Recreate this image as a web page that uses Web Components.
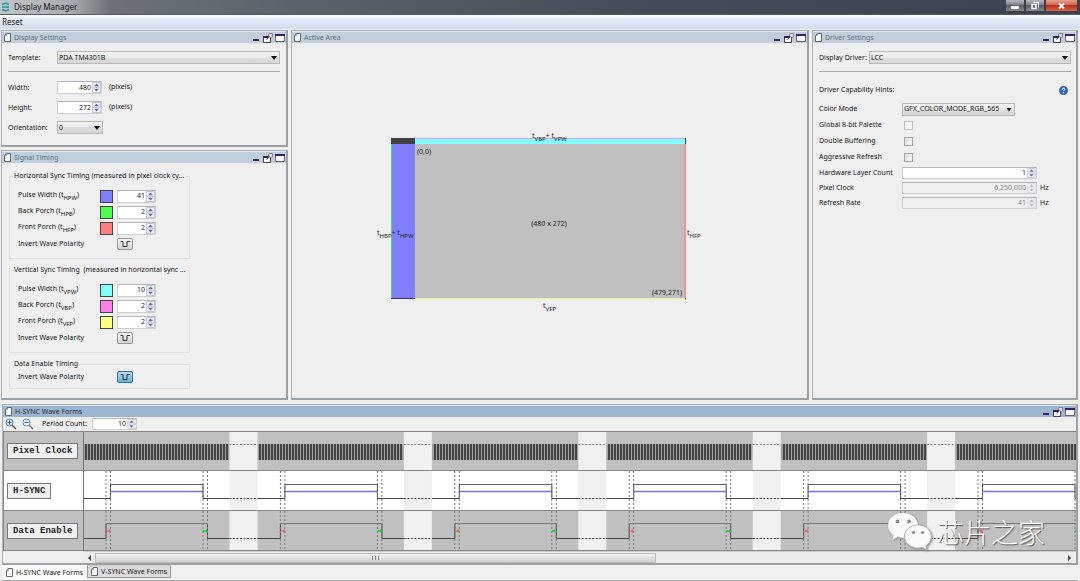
<!DOCTYPE html>
<html lang="en">
<head>
<meta charset="utf-8">
<title>Display Manager</title>
<style>
  html, body { margin: 0; min-height: 100%; background: #f0f0f0; }
  body { font: 7px/10px "Noto Sans", sans-serif; color: #222; }
</style>
</head>
<body>
<display-manager></display-manager>
<script>
const controls = `
  * { box-sizing: border-box; }
  input, select, button { font: inherit; color: inherit; margin: 0; border-radius: 0; }
  .spin { display: inline-flex; height: 13px; background: #fff; border: 1px solid #ccd0d6; border-top-color: #b4b8be; }
  .spin input { flex: 1; min-width: 0; width: 100%; border: 0; padding: 0 1px; background: none; text-align: right; outline: 0; }
  .spin svg { width: 9px; height: 11px; flex: none; }
  .spin.off { background: #efefef; color: #8a8a8a; }
  .spin.off svg { opacity: .45; }
  .drop { display: inline-flex; position: relative; height: 13px; }
  .drop select { appearance: none; width: 100%; height: 100%; padding: 0 12px 0 1px; border: 1px solid #b9b9b9;
    background: linear-gradient(#f3f3f3, #ebebeb 50%, #dedede 50%, #d8d8d8); outline: 0; line-height: 10px; }
  .drop::after { content: ""; position: absolute; right: 3px; top: 5px; width: 6px; height: 4px; background: #111;
    clip-path: polygon(0 0, 100% 0, 50% 100%); pointer-events: none; }
  hr { border: 0; border-top: 1px solid #a9a9a9; margin: 0; }
  sub { font-size: 6px; line-height: 0; vertical-align: -3px; }
`;
const arrows = `<svg viewBox="0 0 9 11" aria-hidden="true"><rect x=".5" y=".5" width="8" height="10" fill="#f1f2f6" stroke="#c4c8d4"/><path d="M0 5.5h9" stroke="#c4c8d4"/><path d="M4.5 1.6 7 4.2H2zM4.500 9.400 7 6.800H2z" fill="#6467a8"/></svg>`;
const spin = (id, value, width, off) =>
  `<span class="spin ${off ? 'off' : ''}" style="width:${width}"><input id="${id}" type="text" value="${value}" ${off ? 'disabled' : ''}>${arrows}</span>`;
const drop = (id, value, width) =>
  `<span class="drop" style="width:${width}"><select id="${id}"><option>${value}</option></select></span>`;
const pageIcon = `<svg class="page" width="7" height="9" viewBox="0 0 7 9" aria-hidden="true"><path d="M2.500.5h4v8h-6v-6z" fill="#fff" stroke="#5c6a76"/><path d="M2.500.5v2h-2" fill="none" stroke="#5c6a76" stroke-width=".6"/></svg>`;

function define(name, css, html, ready) {
  customElements.define(name, class extends HTMLElement {
    constructor() {
      super();
      const root = this.attachShadow({ mode: 'open' });
      root.innerHTML = `<style>${controls}${css}</style>${typeof html === 'function' ? html(this) : html}`;
      if (ready) ready(root, this);
    }
  });
}

/* Docked panel: title strip with window buttons, content in the slot */
define('dock-panel', `
  :host { display: flex; flex-direction: column; border: 1px solid #a9b0b6; border-right: 2px solid #9aa2a8; border-bottom: 2px solid #9aa2a8; background: #efefef; }
  header { display: flex; align-items: center; height: 12px; padding: 0 1px 0 2px; gap: 2px; background: #c0cfdb; color: #5b7182; border-top: 1px solid #dfe6ec; }
  :host([active]) header { background: #9cb5d1; color: #1c2733; }
  h2 { margin: 0 auto 0 1px; font: inherit; white-space: nowrap; }
  button { border: 0; padding: 0; background: none; display: flex; }
  .body { flex: 1; display: flex; flex-direction: column; min-width: 0; }
`, el => `<header>${pageIcon}<h2>${el.getAttribute('heading')}</h2>
  <button aria-label="Minimize"><svg width="9" height="10"><path d="M1 6h6v2H1z" fill="#3d1c66"/></svg></button>
  <button aria-label="Float"><svg width="10" height="10"><path d="M.5 3.500h7v6h-7z" fill="#fff" stroke="#4a3c5c"/><path d="M0 3h6v2H0z" fill="#3d1c66"/><path d="M3.500 6.500 7 3" stroke="#444" fill="none"/><path d="M6 .5h3.500V4L8 5 5 2z" fill="#ddd" stroke="#666" stroke-width=".7"/></svg></button>
  <button aria-label="Maximize"><svg width="10" height="10"><path d="M.5 1.500h9v7h-9z" fill="#fff" stroke="#6a5c7c"/><path d="M0 1h10v2H0z" fill="#3d1c66"/></svg></button>
  </header><div class="body"><slot></slot></div>`);

define('display-settings', `
  :host { display: block; padding: 8px 6px 11px 6px; }
  form { display: grid; grid-template-columns: 49px 1fr; row-gap: 7px; align-items: center; }
  form > * { height: 13px; } label { line-height: 13px; }
  hr { grid-column: 1 / 3; height: 1px; margin-bottom: 2px; }
  .size { display: flex; gap: 7px; line-height: 11px; }
`, `<form>
  <label for="tpl">Template:</label>${drop('tpl', 'PDA TM4301B', '100%')}
  <hr>
  <label for="w">Width:</label><div class="size">${spin('w', 480, '45px')}<span>(pixels)</span></div>
  <label for="h">Height:</label><div class="size">${spin('h', 272, '45px')}<span>(pixels)</span></div>
  <label for="o">Orientation:</label>${drop('o', '0', '46px')}
</form>`);

/* One titled group of timing rows */
define('timing-group', `
  :host { display: block; width: 181px; }
  fieldset { margin: 0; padding: 0 0 0 8px; border: 1px solid #e0e0e0; min-width: 0; }
  legend { padding: 0 1px; margin-left: -5px; height: 10px; white-space: nowrap; }
  slot { display: block; padding: 7px 0 6px; }
  :host([compact]) slot { padding: 0 0 3px; }
`, el => `<fieldset><legend>${el.getAttribute('heading')}</legend><slot></slot></fieldset>`);

define('timing-row', `
  :host { display: grid; grid-template-columns: 78px 13px 39px; column-gap: 4px; align-items: center; height: 16px; }
  label { line-height: 12px; height: 15px; white-space: nowrap; }
  .swatch { width: 13px; height: 13px; padding: 0; border: 1px solid #444; background: var(--swatch); }
`, el => `<label for="v">${el.getAttribute('label')} (t<sub>${el.getAttribute('sub')}</sub>)</label>
  <button class="swatch" aria-label="Colour"></button>${spin('v', el.getAttribute('value'), '39px')}`);

define('polarity-row', `
  :host { display: grid; grid-template-columns: 99px 17px; align-items: center; height: 16px; }
  button { width: 16px; height: 12px; padding: 0; border: 1px solid #999; border-radius: 2px; background: linear-gradient(#f4f4f4, #d5d5d5); display: flex; align-items: center; justify-content: center; }
  :host([on]) button { background: linear-gradient(#b9dcf0, #64aed8); border-color: #33759d; }
  label { white-space: nowrap; }
`, `<label for="b">Invert Wave Polarity</label>
  <button id="b"><svg width="11" height="8" aria-hidden="true"><path d="M.5 1.500h2.500v5h4v-5h3" fill="none" stroke="#333"/></svg></button>`);

define('signal-timing', `
  :host { display: flex; flex-direction: column; gap: 6px; padding: 8px 7px 8px; }
`, `<timing-group heading="Horizontal Sync Timing (measured in pixel clock cy...">
    <timing-row label="Pulse Width" sub="HPW" value="41" style="--swatch:#8080ff"></timing-row>
    <timing-row label="Back Porch" sub="HPB" value="2" style="--swatch:#4dff4d"></timing-row>
    <timing-row label="Front Porch" sub="HFP" value="2" style="--swatch:#ff8080"></timing-row>
    <polarity-row></polarity-row>
  </timing-group>
  <timing-group heading="Vertical Sync Timing&nbsp; (measured in horizontal sync ...">
    <timing-row label="Pulse Width" sub="VPW" value="10" style="--swatch:#80ffff"></timing-row>
    <timing-row label="Back Porch" sub="VBP" value="2" style="--swatch:#ff80e8"></timing-row>
    <timing-row label="Front Porch" sub="VFP" value="2" style="--swatch:#ffff80"></timing-row>
    <polarity-row></polarity-row>
  </timing-group>
  <timing-group compact heading="Data Enable Timing"><polarity-row on></polarity-row></timing-group>`);

define('active-area', `
  :host { flex: 1; display: flex; align-items: center; justify-content: center; }
  text { font: 7px "Noto Sans", sans-serif; fill: #222; }
  .s { font-size: 6px; }
  path { shape-rendering: crispEdges; }
`, `<svg width="345" height="182" viewBox="0 0 345 182" role="img" aria-label="Active area diagram">
  <path d="M14 8h295v161H14z" fill="#c0c0c0"/>
  <path d="M38 8h270v2H38z" fill="#d9a3f3"/><path d="M38 9h270v5H38z" fill="#80ffff"/>
  <path d="M15 14h23v154H15z" fill="#8080ff"/><path d="M14 14h1v154h-1z" fill="#40e070"/>
  <path d="M14 8h24v6H14z" fill="#404040"/><path d="M14 168h24v1H14z" fill="#333366"/>
  <path d="M38 168h270v1H38z" fill="#f2f28c"/><path d="M307 14h2v154h-2z" fill="#f79090"/>
  <path d="M308 8h1v6h-1zM308 168h1v1h-1z" fill="#404040"/>
  <text x="40" y="24">(0,0)</text>
  <text x="172" y="96" text-anchor="middle">(480 x 272)</text>
  <text x="305" y="165" text-anchor="end">(479,271)</text>
  <text x="155" y="8">t<tspan class="s" dy="3">VBP</tspan><tspan dy="-3">+ t</tspan><tspan class="s" dy="3">VPW</tspan></text>
  <text x="0" y="105">t<tspan class="s" dy="3">HBP</tspan><tspan dy="-3">+ t</tspan><tspan class="s" dy="3">HPW</tspan></text>
  <text x="310" y="105">t<tspan class="s" dy="3">HFP</tspan></text>
  <text x="166" y="178">t<tspan class="s" dy="3">VFP</tspan></text>
</svg>`);

define('driver-settings', `
  :host { display: flex; flex-direction: column; padding: 8px 5px 8px 6px; }
  .row { display: grid; grid-template-columns: 83px 1fr; align-items: center; height: 16px; }
  .row > span.unit { display: flex; gap: 3px; align-items: center; }
  .num { height: 15px; }
  .top { grid-template-columns: 50px 1fr; height: 13px; white-space: nowrap; }
  hr { margin: 7px 0 11px; }
  .hints { display: flex; justify-content: space-between; align-items: center; height: 14px; margin-bottom: 4px; }
  h3 { margin: 0; font: inherit; }
  .hints button { border: 0; padding: 0; background: none; display: flex; margin-right: 3px; }
  input[type=checkbox] { appearance: none; width: 9px; height: 9px; margin-left: 2px; border: 1px solid #a4a4a4; background: linear-gradient(135deg, #ddd, #f7f7f7); }
  input[type=checkbox]:disabled { border-color: #c4c4c4; background: #f7f7f7; }
  .num .spin { height: 12px; } .num .spin svg { height: 10px; }
`, `<div class="row top"><label for="dd">Display Driver:</label>${drop('dd', 'LCC', '100%')}</div><hr>
  <div class="hints"><h3>Driver Capability Hints:</h3><button aria-label="Help"><svg width="9" height="9" viewBox="0 0 9 9"><circle cx="4.500" cy="4.500" r="4.200" fill="#2f6cc4" stroke="#1c4c9a" stroke-width=".5"/><path d="M3.200 3.600c0-1.800 2.600-1.700 2.600-.2 0 .9-1.300 1-1.300 2M4.500 6.200v1" fill="none" stroke="#fff"/></svg></button></div>
  <div class="row"><label for="cm">Color Mode</label>${drop('cm', 'GFX_COLOR_MODE_RGB_565', '113px')}</div>
  <div class="row"><label for="gp">Global 8-bit Palette</label><input type="checkbox" id="gp" disabled></div>
  <div class="row"><label for="db">Double Buffering</label><input type="checkbox" id="db"></div>
  <div class="row"><label for="ar">Aggressive Refresh</label><input type="checkbox" id="ar"></div>
  <div class="row num"><label for="hl">Hardware Layer Count</label>${spin('hl', 1, '135px')}</div>
  <div class="row num"><label for="pc">Pixel Clock</label><span class="unit">${spin('pc', '6,250,000', '135px', true)}Hz</span></div>
  <div class="row num"><label for="rr">Refresh Rate</label><span class="unit">${spin('rr', 41, '135px', true)}Hz</span></div>`);

/* Timing chart: fixed signal names on the left, repeated periods on the right */
define('wave-chart', `
  :host { display: grid; grid-template-columns: 80px 1fr; height: 120px; border-top: 1px solid #888; border-left: 1px solid #888; overflow: hidden; }
  .names { display: grid; grid-template-rows: 39px 40px 40px; border-right: 1px solid #777; }
  .names div { display: flex; align-items: center; padding-left: 3px; background: #c0c0c0; border-bottom: 1px solid #888; }
  .names div:nth-child(2) { background: #fff; }
  .names span { font: bold 9px/14px "Liberation Mono", monospace; padding: 0 5px; border: 1px solid #777; background: #f0f0f0; color: #222; white-space: nowrap; }
  .plot { overflow: hidden; min-width: 0; }
  svg { display: block; }
`, `<div class="names"><div><span>Pixel Clock</span></div><div><span>H-SYNC</span></div><div><span>Data Enable</span></div></div>
  <div class="plot"></div>`, root => {
  const period = 174.4, count = 16;
  const rise = 26.5, fall = 119, gap = 145.5, gapEnd = 173.5, de1 = 22, de2 = 123.5;
  let body = '';
  for (let i = -1; i < count; i++) {
    const o = i * period, X = v => (o + v).toFixed(1);
    body += `<path d="M${X(gapEnd - period)} 12H${X(gap)}V28H${X(gapEnd - period)}z" fill="#a0a0a0"/>`;
    for (let c = 1; c < 145; c += 3) body += `<path d="M${Math.round(o + c)} 12h2v16h-2z" fill="#444"/>`;
  }
  for (let i = -1; i < count; i++) {
    const o = i * period, X = v => (o + v).toFixed(1);
    const line = (lo, hi, a, b, top) => `<path d="M${X(gapEnd - period)} ${lo}H${X(a)}V${hi}M${X(b)} ${hi}V${lo}H${X(gap)}" fill="none" stroke="#444"/><path d="M${X(a)} ${hi}H${X(b)}" stroke="${top}"/>`;
    body += `<path d="M${X(gap)} 0H${X(gapEnd)}V118H${X(gap)}z" fill="#f0f0f0"/>
      <path d="M${X(gap)} 12.500h28" stroke="#888" stroke-dasharray="2 1.500"/>
      <path d="M${X(gap)} 66.500h28M${X(gap)} 106.500h28" stroke="#444" stroke-dasharray="2 1.500"/>
      <path d="M${X(rise)} 59.500H${X(fall)}" stroke="#7474e6" stroke-width="1.400"/>
      ${line(66.5, 52.5, rise, fall, '#666')}${line(106.5, 91.5, de1, de2, '#777')}
      <path d="M${X(de1)} 39v80M${X(rise)} 39v80M${X(fall)} 39v80M${X(de2)} 39v80" stroke="#777" stroke-dasharray="2 2"/>
      <path d="M${X(de1 + 1)} 99l3-1.500v3zM${X(de1 + 3)} 99h2" fill="#f06060" stroke="#f06060" stroke-width=".5"/>
      <path d="M${X(fall)} 98h3v-1l2 2-2 2v-1h-3z" fill="#33cc33"/>`;
  }
  root.querySelector('.plot').innerHTML = `<svg width="${Math.ceil(period * count)}" height="119" aria-hidden="true">
    <rect width="100%" height="119" fill="#c0c0c0"/><rect y="39" width="100%" height="39" fill="#fff"/>
    ${body}<path d="M0 38.500H2800M0 78.500H2800M0 118.500H2800" stroke="#888"/></svg>`;
});

define('wave-forms', `
  :host { display: block; }
  .tools { display: flex; align-items: center; height: 14px; padding: 0 2px; gap: 5px; }
  .tools button { border: 0; padding: 0; background: none; display: flex; }
  .tools label { margin: 0 0 0 3px; }
  .tools .spin { height: 12px; } .tools .spin svg { height: 10px; }
  .scroll { display: flex; align-items: center; height: 12px; margin-left: 80px; padding-right: 1px; background: #ececec; border-top: 1px solid #ccc; }
  .scroll button { width: 12px; border: 0; padding: 0; background: none; display: flex; justify-content: center; }
  .track { flex: 1; height: 10px; }
  .thumb { width: 58%; height: 10px; border: 1px solid #bbb; background: linear-gradient(#f4f4f4, #cfcfcf); display: flex; align-items: center; justify-content: center; }
`, `<div class="tools">
    <button aria-label="Zoom in"><svg width="12" height="12"><path d="m7 7 4 4" stroke="#555" stroke-width="1.500"/><circle cx="4.500" cy="4.500" r="3.500" fill="#eaf4fc" stroke="#4b7ea8"/><path d="M2.500 4.500h4M4.500 2.500v4" stroke="#245f96"/></svg></button>
    <button aria-label="Zoom out"><svg width="12" height="12"><path d="m7 7 4 4" stroke="#777" stroke-width="1.500"/><circle cx="4.500" cy="4.500" r="3.500" fill="#eaf4fc" stroke="#6b8ea8"/><path d="M2.500 4.500h4" stroke="#245f96"/></svg></button>
    <label for="n">Period Count:</label>${spin('n', 10, '45px')}
  </div>
  <wave-chart></wave-chart>
  <div class="scroll">
    <button aria-label="Scroll left"><svg width="5" height="6"><path d="M4 0v6L1 3z" fill="#444"/></svg></button>
    <div class="track"><div class="thumb"><svg width="7" height="4"><path d="M.5 0v4M3.500 0v4M6.500 0v4" stroke="#888"/></svg></div></div>
    <button aria-label="Scroll right"><svg width="5" height="6"><path d="M1 0v6l3-3z" fill="#444"/></svg></button>
  </div>`);

define('view-tabs', `
  :host { display: flex; box-sizing: border-box; height: 16px; align-items: flex-start; border-bottom: 1px solid #aaa; }
  button { display: flex; align-items: center; gap: 3px; height: 15px; padding: 0 4px; border: 0; background: #fafafa; white-space: nowrap; }
  button + button { height: 13px; background: #dcdcdc; border: 1px solid #999; border-top-color: #ccc; padding: 0 3px; }
`, `<button>${pageIcon}H-SYNC Wave Forms</button><button>${pageIcon}V-SYNC Wave Forms</button>`);

define('water-mark', `
  :host { position: absolute; right: 35px; bottom: 29px; display: flex; align-items: center; gap: 5px; pointer-events: none; }
  span { font: 300 27px/40px "Noto Sans CJK SC", sans-serif; color: #fff; text-shadow: 1px 1px 1px #555; }
  svg { filter: drop-shadow(1px 1px 1px #888); }
`, `<svg width="44" height="38" viewBox="0 0 44 38" aria-hidden="true">
    <path d="M15 0C6.500 0 0 5.500 0 12.500c0 4 2.200 7.400 5.600 9.700L4.200 27l5.600-3c1.600.5 3.400.8 5.200.8 8.500 0 15-5.500 15-12.300S23.500 0 15 0z" fill="#fafafa"/>
    <path d="M30 12c-7.500 0-13.500 5-13.500 11.500S22.500 35 30 35c1.500 0 3-.2 4.400-.6L39 37l-1.200-4.200c3.300-2.100 5.400-5.400 5.400-9.300C43.200 17 37.500 12 30 12z" fill="#fafafa" stroke="#b5b5b5"/>
    <g fill="#8a8a8a"><circle cx="9.500" cy="8.500" r="1.900"/><circle cx="21" cy="8.500" r="1.900"/><circle cx="25.500" cy="19.500" r="1.600"/><circle cx="34.500" cy="19.500" r="1.600"/></g>
  </svg><span>芯片之家</span>`);

define('display-manager', `
  :host { display: flex; flex-direction: column; position: relative; min-height: 100vh; overflow: hidden; }
  .title { display: flex; align-items: center; height: 15px; padding-left: 1px; gap: 4px; background: linear-gradient(90deg, #c2c5c8, #a9adb1 70px, #6c7278 110px, #5b626b 300px, #454c57 60%, #3c4350); border-bottom: 1px solid #555b62; }
  h1 { margin: 0 auto 0 0; font: 8px/12px "Noto Sans", sans-serif; color: #111; }
  .win { display: flex; align-self: flex-start; margin-right: 2px; }
  .win button { height: 12px; width: 20px; padding: 0; border: 1px solid #3b3f45; border-top: 0; background: linear-gradient(#b4b8bc, #777c82 50%, #5a5f66 50%, #83888e); display: flex; align-items: center; justify-content: center; }
  .win button:last-child { width: 33px; background: linear-gradient(#e3a090, #d0604a 50%, #b93018 50%, #d9664a); }
  nav { display: flex; align-items: center; height: 14px; padding-left: 2px; background: linear-gradient(#fafbfe, #e3e8f5 40%, #d3dbef); margin-bottom: 1px; }
  nav button { font: 8px/12px "Noto Sans", sans-serif; border: 0; padding: 0; background: none; }
  main { flex: 1; display: grid; grid-template: auto 1fr / 287px 1fr 266px; gap: 3px; padding: 0 2px 0 1px; }
  .tall { grid-row: 1 / 3; }
  .tall.mid { grid-column: 2; } .tall.right { grid-column: 3; }
  footer { margin-top: 4px; padding: 0 2px; }
`, `<div class="title"><svg width="9" height="10" aria-hidden="true"><path d="M1 2.500 4.500 1 8 2.500M1 5h7M1 7.500 4.500 9 8 7.500" fill="none" stroke="#1f9aa5" stroke-width="1.500"/></svg><h1>Display Manager</h1>
    <div class="win">
      <button aria-label="Minimize"><svg width="10" height="8"><path d="M1 4h8v3H1z" fill="#fff"/></svg></button>
      <button aria-label="Restore"><svg width="10" height="9"><path d="M3.500 1.500h5v5" fill="none" stroke="#fff"/><path d="M2 3.500h4v4H2z" fill="none" stroke="#fff" stroke-width="1.500"/></svg></button>
      <button aria-label="Close"><svg width="9" height="8"><path d="m2 1.500 5 5M7 1.500l-5 5" stroke="#fff" stroke-width="1.800"/></svg></button>
    </div></div>
  <nav><button>Reset</button></nav>
  <main>
    <dock-panel heading="Display Settings"><display-settings></display-settings></dock-panel>
    <dock-panel class="tall mid" heading="Active Area"><active-area></active-area></dock-panel>
    <dock-panel class="tall right" heading="Driver Settings"><driver-settings></driver-settings></dock-panel>
    <dock-panel heading="Signal Timing"><signal-timing></signal-timing></dock-panel>
  </main>
  <footer>
    <dock-panel active heading="H-SYNC Wave Forms"><wave-forms></wave-forms></dock-panel>
    <view-tabs></view-tabs>
  </footer>
  <water-mark></water-mark>`);
</script>
</body>
</html>
